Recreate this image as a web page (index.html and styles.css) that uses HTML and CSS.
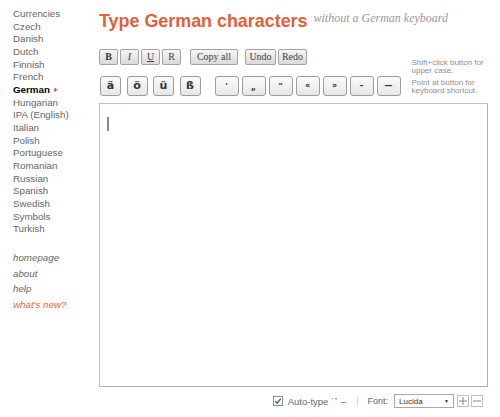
FILE: index.html
```html
<!DOCTYPE html>
<html>
<head>
<meta charset="utf-8">
<title>Type German characters</title>
<link rel="stylesheet" href="styles.css">
</head>
<body>
<div class="page">
  <nav class="sidebar">
    <ul class="langs">
      <li>Currencies</li>
      <li>Czech</li>
      <li>Danish</li>
      <li>Dutch</li>
      <li>Finnish</li>
      <li>French</li>
      <li class="current">German <span class="diamond">&#9830;</span></li>
      <li>Hungarian</li>
      <li>IPA (English)</li>
      <li>Italian</li>
      <li>Polish</li>
      <li>Portuguese</li>
      <li>Romanian</li>
      <li>Russian</li>
      <li>Spanish</li>
      <li>Swedish</li>
      <li>Symbols</li>
      <li>Turkish</li>
    </ul>
    <ul class="links">
      <li>homepage</li>
      <li>about</li>
      <li>help</li>
      <li class="new">what's new?</li>
    </ul>
  </nav>

  <main class="main">
    <header class="title-row">
      <h1>Type German characters</h1>
      <span class="subtitle">without a German keyboard</span>
    </header>

    <div class="toolbar">
      <div class="rows">
        <div class="row row-format">
          <div class="group fmt">
            <button class="btn sq bold">B</button>
            <button class="btn sq ital">I</button>
            <button class="btn sq under">U</button>
            <button class="btn sq">R</button>
          </div>
          <button class="btn copy">Copy all</button>
          <div class="group hist">
            <button class="btn undo">Undo</button>
            <button class="btn redo">Redo</button>
          </div>
        </div>
        <div class="row row-chars">
          <div class="group letters">
            <button class="key letter">ä</button>
            <button class="key letter">ö</button>
            <button class="key letter">ü</button>
            <button class="key letter">ß</button>
          </div>
          <div class="group punct">
            <button class="key p top">’</button>
            <button class="key p bottom">„</button>
            <button class="key p top">“</button>
            <button class="key p">«</button>
            <button class="key p">»</button>
            <button class="key p">–</button>
            <button class="key p">—</button>
          </div>
        </div>
      </div>
      <div class="notes">
        <p>Shift+click button for upper case.</p>
        <p>Point at button for keyboard shortcut.</p>
      </div>
    </div>

    <div class="editor"><span class="caret"></span></div>

    <div class="statusbar">
      <span class="check">
        <svg width="10" height="10" viewBox="0 0 10 10"><rect x="0.5" y="0.5" width="9" height="9" fill="#fff" stroke="#7d8ea9"/><path d="M2.3 5.2 L4.2 7.2 L7.8 2.6" fill="none" stroke="#3a5a9a" stroke-width="1.4"/></svg>
      </span>
      <span class="autotype">Auto-type<span class="quotes">’ ”</span>–</span>
      <span class="sep">|</span>
      <span class="font-label">Font:</span>
      <span class="select">Lucida<span class="arrow">&#9660;</span></span>
      <span class="size">
        <svg width="12" height="12" viewBox="0 0 12 12"><rect x="0.5" y="0.5" width="11" height="11" fill="#fff" stroke="#c2c2c2"/><path d="M6 2 V10 M2 6 H10" stroke="#8a8a8a" stroke-width="1"/></svg>
      </span>
      <span class="size">
        <svg width="12" height="12" viewBox="0 0 12 12"><rect x="0.5" y="0.5" width="11" height="11" fill="#fff" stroke="#c2c2c2"/><path d="M2 6 H10" stroke="#8a8a8a" stroke-width="1"/></svg>
      </span>
    </div>
  </main>
</div>
</body>
</html>
```

FILE: styles.css
```css
html, body {
  margin: 0;
  padding: 0;
  background: #ffffff;
}

.page {
  display: flex;
  align-items: flex-start;
  font-family: "Liberation Sans", Arial, sans-serif;
}

/* Sidebar */
.sidebar {
  flex: none;
  width: 99px;
  box-sizing: border-box;
  padding: 8px 0 0 13px;
  font-size: 9.75px;
  line-height: 12.65px;
  color: #666666;
}

.sidebar ul {
  list-style: none;
  margin: 0;
  padding: 0;
}

.langs .current {
  color: #000000;
  font-weight: bold;
}

.diamond {
  color: #e0553a;
  font-size: 7.5px;
  font-weight: normal;
  vertical-align: 1px;
  margin-left: 1px;
}

.links {
  margin-top: 14.5px !important;
  font-style: italic;
  line-height: 15.4px;
}

.links .new {
  color: #e8603c;
}

/* Main column */
.main {
  flex: none;
  padding-top: 11px;
}

.title-row {
  display: flex;
  align-items: flex-start;
  gap: 6px;
}

h1 {
  margin: 0;
  font-family: "Liberation Sans", Arial, sans-serif;
  font-weight: bold;
  font-size: 17.9px;
  line-height: 20px;
  color: #e2603a;
}

.subtitle {
  font-family: "Liberation Serif", "Times New Roman", serif;
  font-style: italic;
  font-size: 12px;
  line-height: 14px;
  color: #9a9a9a;
}

/* Toolbar */
.toolbar {
  display: flex;
  align-items: flex-start;
  margin-top: 18px;
}

.rows {
  display: flex;
  flex-direction: column;
  gap: 11px;
}

.row {
  display: flex;
  align-items: center;
}

.group {
  display: flex;
}

.btn {
  margin: 0;
  padding: 0;
  height: 16px;
  box-sizing: border-box;
  border: 1px solid #a3a3a3;
  border-radius: 2px;
  background: linear-gradient(#f6f6f6, #dadada);
  font-family: "Liberation Serif", "Times New Roman", serif;
  font-size: 10px;
  line-height: 14px;
  color: #444444;
  text-align: center;
}

.fmt {
  gap: 2px;
}

.sq {
  width: 19px;
}

.bold {
  font-weight: bold;
  color: #333;
}

.ital {
  font-style: italic;
}

.under {
  text-decoration: underline;
}

.copy {
  width: 48px;
  margin-left: 9px;
}

.hist {
  margin-left: 7px;
  gap: 2px;
}

.undo {
  width: 31px;
}

.redo {
  width: 29px;
}

.key {
  margin: 0;
  padding: 0;
  height: 20px;
  box-sizing: border-box;
  border: 1px solid #9c9c9c;
  border-radius: 3px;
  background: linear-gradient(#fbfbfb, #e6e6e6);
  color: #333333;
  text-align: center;
}

.letters {
  gap: 5.5px;
  margin-left: 1px;
}

.letter {
  width: 21px;
  font-family: "DejaVu Sans", sans-serif;
  font-weight: bold;
  font-size: 11px;
  line-height: 18px;
}

.punct {
  gap: 3px;
  margin-left: 14px;
}

.p {
  width: 24px;
  font-family: "DejaVu Sans", sans-serif;
  font-weight: bold;
  font-size: 8px;
  line-height: 18px;
}

.p.top {
  line-height: 12px;
  font-size: 7px;
}

.p.bottom {
  line-height: 22px;
  font-size: 8px;
}

.notes {
  margin-left: 11px;
  margin-top: 10px;
  width: 86px;
  font-size: 8px;
  line-height: 8px;
  color: #8f8f8f;
}

.notes p {
  margin: 0 0 4px 0;
}

.notes p:last-child {
  margin-bottom: 0;
}

/* Editor */
.editor {
  margin-top: 7px;
  width: 389px;
  height: 284px;
  box-sizing: border-box;
  border: 1px solid #b7c3d8;
  border-right-color: #a6b0c2;
  border-bottom-color: #a6b0c2;
  padding: 13px 0 0 7px;
  background: #ffffff;
}

.caret {
  display: block;
  width: 2px;
  height: 14px;
  background: #8a8a8a;
}

/* Status bar */
.statusbar {
  width: 389px;
  box-sizing: border-box;
  margin-top: 7px;
  padding-right: 5px;
  height: 14px;
  display: flex;
  align-items: center;
  justify-content: flex-end;
  font-family: "Liberation Sans", Arial, sans-serif;
  font-size: 8.5px;
  color: #666666;
}

.check {
  display: flex;
  margin-right: 5px;
}

.autotype {
  white-space: nowrap;
  font-size: 9.5px;
}

.quotes {
  font-size: 7px;
  vertical-align: 2px;
  margin: 0 4px 0 3px;
}

.sep {
  color: #c8c8c8;
  margin: 0 9px 0 10px;
}

.font-label {
  margin-right: 6px;
  font-size: 9px;
}

.select {
  display: flex;
  align-items: center;
  justify-content: space-between;
  width: 60px;
  height: 14px;
  box-sizing: border-box;
  border: 1px solid #a9a9a9;
  padding: 0 4px 0 4px;
  font-size: 8px;
  color: #333333;
  background: #ffffff;
}

.arrow {
  font-size: 5px;
  color: #222;
}

.size {
  display: flex;
  margin-left: 3px;
}

.size + .size {
  margin-left: 2px;
}
```
